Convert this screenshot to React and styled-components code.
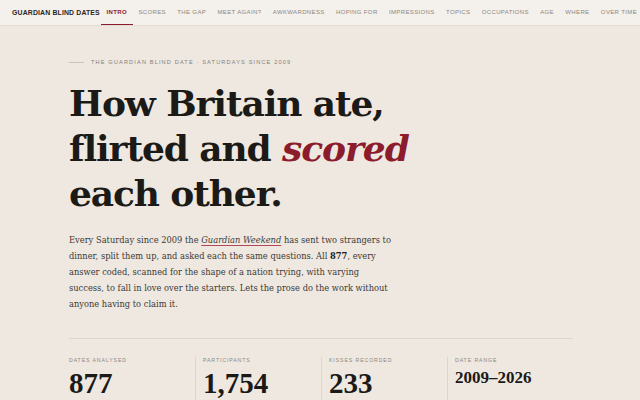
import React from 'react'
import styled, { createGlobalStyle } from 'styled-components'

const GlobalStyle = createGlobalStyle`
  html, body { margin: 0; padding: 0; }
  body {
    background: #eee8e1;
    font-family: "DejaVu Serif", serif;
    color: #1c1a17;
    overflow: hidden;
  }
`

const tabs = [
  'Intro', 'Scores', 'The gap', 'Meet again?', 'Awkwardness', 'Hoping for',
  'Impressions', 'Topics', 'Occupations', 'Age', 'Where', 'Over time'
]

const stats = [
  { label: 'Dates analysed', value: '877' },
  { label: 'Participants', value: '1,754' },
  { label: 'Kisses recorded', value: '233' },
  { label: 'Date range', value: '2009–2026', small: true }
]

const App = () => {
  return (
    <>
      <GlobalStyle />
      <Nav>
        <Brand>Guardian Blind Dates</Brand>
        {tabs.map((t, i) => (
          <Tab key={t} $active={i === 0}>{t}</Tab>
        ))}
      </Nav>
      <Main>
        <Eyebrow>
          <Rule />
          The Guardian Blind Date · Saturdays since 2009
        </Eyebrow>
        <Headline>
          How Britain ate,<br />
          flirted and <em>scored</em><br />
          each other.
        </Headline>
        <Lede>
          Every Saturday since 2009 the <LinkText>Guardian Weekend</LinkText> has sent two strangers to<br />
          dinner, split them up, and asked each the same questions. All <b>877</b>, every<br />
          answer coded, scanned for the shape of a nation trying, with varying<br />
          success, to fall in love over the starters. Lets the prose do the work without<br />
          anyone having to claim it.
        </Lede>
        <Stats>
          {stats.map((s) => (
            <Stat key={s.label}>
              <StatLabel>{s.label}</StatLabel>
              <StatValue $small={s.small}>{s.value}</StatValue>
            </Stat>
          ))}
        </Stats>
      </Main>
    </>
  )
}

export default App

const Nav = styled.nav`
  display: flex;
  align-items: stretch;
  height: 25px;
  padding-left: 12px;
  background: #f4f0eb;
  border-bottom: 1px solid #e2dcd4;
  font-family: "Liberation Sans", Arial, sans-serif;
  white-space: nowrap;
  overflow: hidden;
`

const Brand = styled.div`
  display: flex;
  align-items: center;
  font-size: 6.9px;
  font-weight: 700;
  letter-spacing: 0.15px;
  text-transform: uppercase;
  color: #2a2724;
  margin-right: 1px;
`

const Tab = styled.div`
  display: flex;
  align-items: center;
  padding: 0 5.7px;
  font-size: 6px;
  letter-spacing: 0.36px;
  text-transform: uppercase;
  color: ${(p) => (p.$active ? '#8c1c2c' : '#8d8780')};
  font-weight: ${(p) => (p.$active ? 700 : 400)};
  border-bottom: 2px solid ${(p) => (p.$active ? '#8c1c2c' : 'transparent')};
  margin-bottom: -1px;
`

const Main = styled.main`
  padding: 33px 0 0 69px;
  width: 504px;
`

const Eyebrow = styled.div`
  display: flex;
  align-items: center;
  gap: 7px;
  font-family: "Liberation Sans", Arial, sans-serif;
  font-size: 5.6px;
  letter-spacing: 1.15px;
  text-transform: uppercase;
  color: #85807a;
`

const Rule = styled.span`
  display: block;
  width: 15px;
  height: 1px;
  background: #c9c2ba;
`

const Headline = styled.h1`
  margin: 16px 0 0;
  font-family: "DejaVu Serif", serif;
  font-weight: 700;
  font-size: 36px;
  line-height: 45px;
  letter-spacing: -1.1px;
  color: #1c1a17;
  em {
    font-style: italic;
    color: #8c1c2c;
  }
`

const Lede = styled.p`
  margin: 16px 0 0;
  width: 360px;
  font-size: 8.3px;
  line-height: 16px;
  color: #3d3a36;
  white-space: nowrap;
  b { color: #1c1a17; }
`

const LinkText = styled.i`
  text-decoration: underline;
  text-decoration-color: #b0485a;
  text-underline-offset: 2px;
`

const Stats = styled.div`
  display: grid;
  grid-template-columns: repeat(4, 1fr);
  margin-top: 26px;
  padding-top: 18px;
  border-top: 1px solid #ddd6cd;
`

const Stat = styled.div`
  padding-left: 7px;
  border-left: 1px solid #ddd6cd;
  &:first-child { padding-left: 0; border-left: none; }
`

const StatLabel = styled.div`
  font-family: "Liberation Sans", Arial, sans-serif;
  font-size: 5.2px;
  letter-spacing: 0.9px;
  text-transform: uppercase;
  color: #8d8780;
`

const StatValue = styled.div`
  margin-top: ${(p) => (p.$small ? '6px' : '5px')};
  font-family: "Liberation Serif", serif;
  font-weight: 700;
  font-size: ${(p) => (p.$small ? '17px' : '29px')};
  line-height: 1.1;
  color: #1c1a17;
`
